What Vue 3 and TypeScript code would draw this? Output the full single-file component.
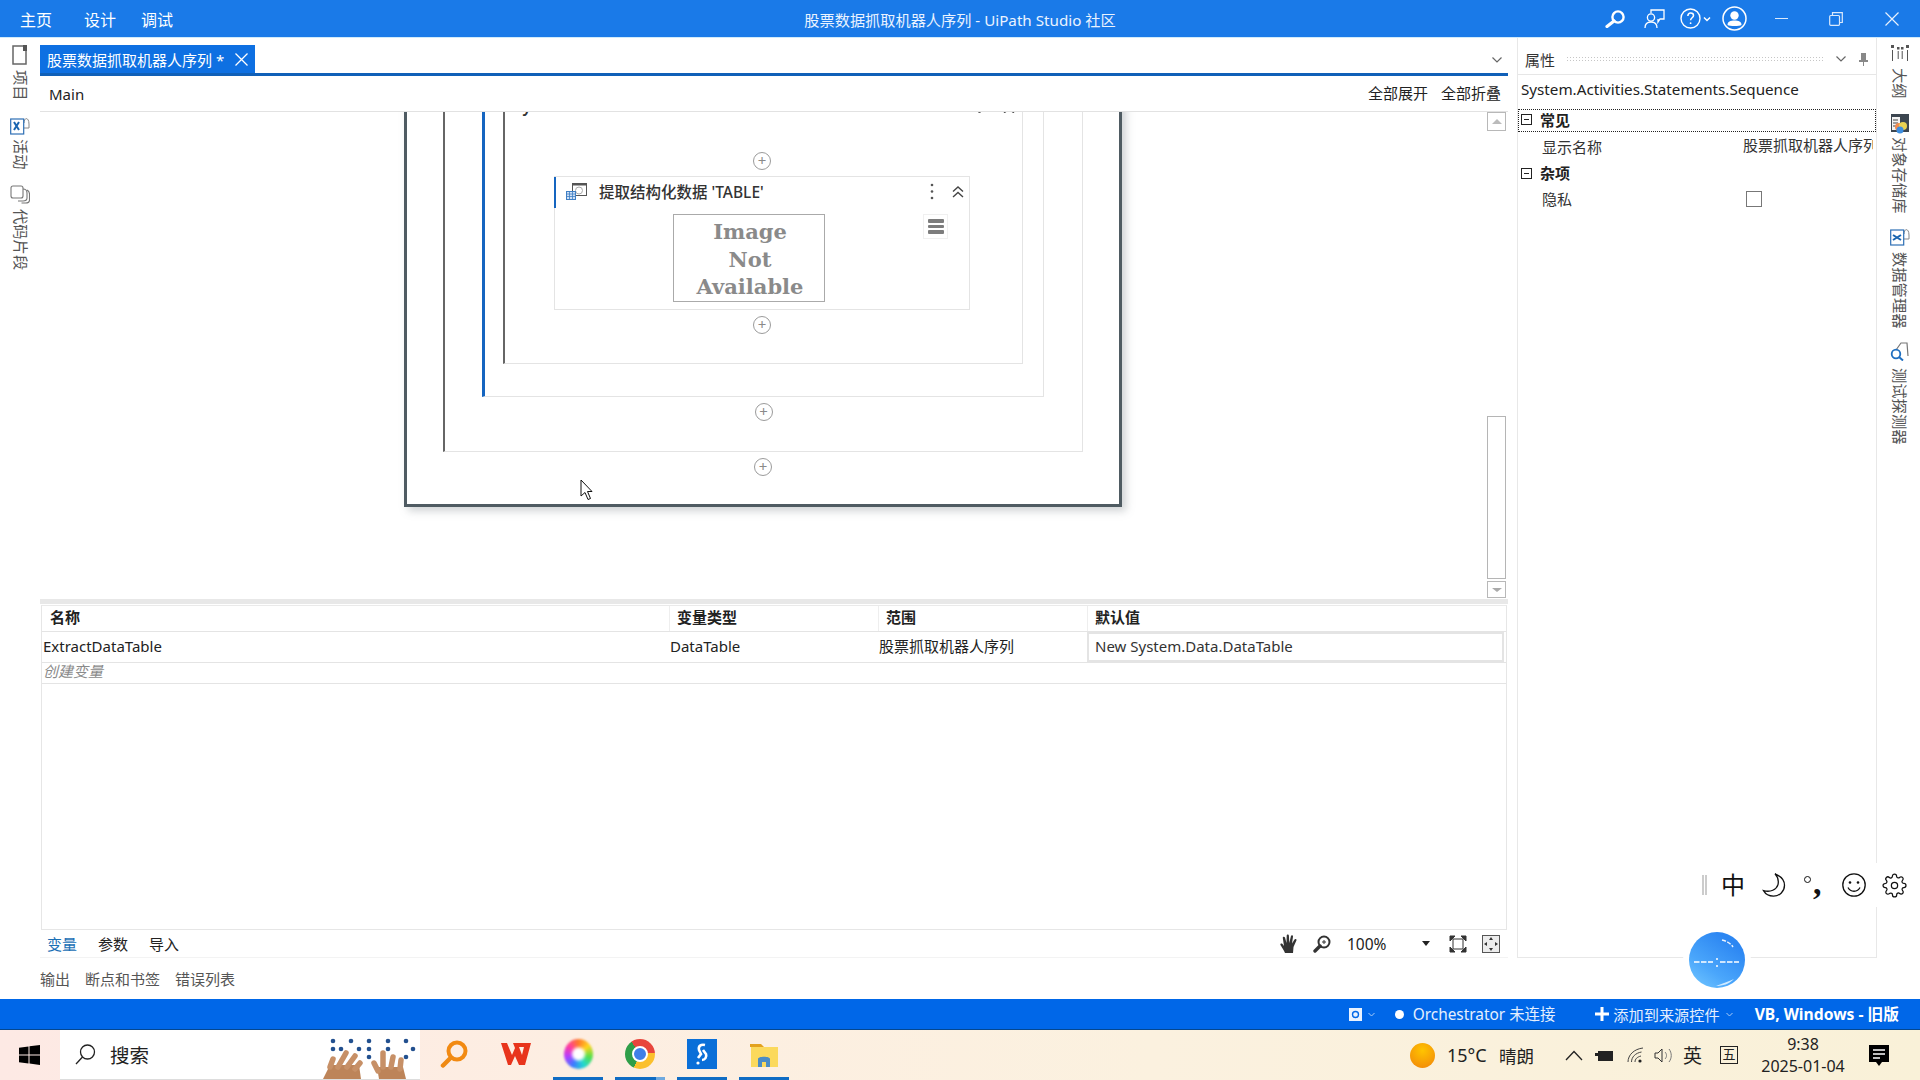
<script setup lang="ts">
const menus: string[] = ['主页', '设计', '调试']
const varTabs: string[] = ['变量', '参数', '导入']
const outTabs: string[] = ['输出', '断点和书签', '错误列表']
const headers: string[] = ['名称', '变量类型', '范围', '默认值']
const brailleDots: [number, number][] = [
  [12, 12], [30, 12], [48, 12], [67, 12], [85, 12],
  [12, 20], [20, 20], [38, 20], [48, 20], [67, 20], [92, 20],
  [48, 28], [85, 28]
]
</script>

<template>
  <div class="screen">
    <header class="titlebar">
      <nav class="menus">
        <span v-for="m in menus" :key="m" class="menu">{{ m }}</span>
      </nav>
      <div class="apptitle">股票数据抓取机器人序列 - UiPath Studio 社区</div>
      <div class="winbtns">
        <svg class="tb-search" width="22" height="18" viewBox="0 0 22 18" fill="none" stroke="#fff"><circle cx="14" cy="7" r="5.6" stroke-width="2.4"/><path d="M10 11 3 16.5" stroke-width="3.2" stroke-linecap="round"/></svg>
        <svg class="tb-feedback" width="21" height="20" viewBox="0 0 21 20" fill="none" stroke="#fff" stroke-width="1.3"><path d="M7 4V1h13v9h-4l-2 3v-3"/><circle cx="7" cy="8.5" r="3.6"/><path d="M1 19c0-4 2.500-6 6-6s6 2 6 6"/></svg>
        <svg class="tb-help" width="21" height="21" viewBox="0 0 21 21" fill="none" stroke="#fff" stroke-width="1.4"><circle cx="10.500" cy="10.500" r="9.500"/><path d="M7.800 8c.2-2 1.400-3 2.900-3 1.700 0 2.800 1 2.800 2.500 0 2.300-2.900 2.300-2.900 4.800" stroke-width="1.500"/><circle cx="10.600" cy="15.200" r=".9" fill="#fff" stroke="none"/></svg>
        <svg class="tb-caret" width="8" height="6" viewBox="0 0 8 6" fill="none" stroke="#fff" stroke-width="1.500"><path d="M1 1.500 4 4.500 7 1.500"/></svg>
        <svg class="tb-user" width="25" height="25" viewBox="0 0 25 25" fill="none"><circle cx="12.500" cy="12.500" r="11.500" stroke="#fff" stroke-width="1.500"/><circle cx="12.500" cy="9.500" r="4.200" fill="#fff"/><path d="M5.500 19c0-3.500 3-4.500 7-4.500s7 1 7 4.500c-2 1.300-12 1.300-14 0z" fill="#fff"/></svg>
        <span class="tb-min"></span>
        <svg class="tb-restore" width="14" height="14" viewBox="0 0 14 14" fill="none" stroke="#dbe9fb" stroke-width="1.200"><rect x=".7" y="3.500" width="9.800" height="9.800" rx="1"/><path d="M3.500 3.500V.7h9.800v9.800h-2.800"/></svg>
        <svg class="tb-close" width="14" height="14" viewBox="0 0 14 14" stroke="#e8f1fd" stroke-width="1.200"><path d="M.5.500l13 13M13.500.500l-13 13"/></svg>
      </div>
    </header>

    <main class="workspace">
      <aside class="strip strip-left">
        <div class="dock dock-project">
          <svg width="16" height="20" viewBox="0 0 16 20" fill="none"><rect x="1" y="1" width="13" height="18" stroke="#666" stroke-width="1.500"/><path d="M11 0h4v6h-4z" fill="#555"/></svg>
          <span class="vtext">项目</span>
        </div>
        <div class="dock dock-activity">
          <svg width="20" height="18" viewBox="0 0 20 18" fill="none"><path d="M14 6c0-6 5-6 5 1v4h-5" stroke="#888"/><rect x=".7" y="2" width="13" height="15" fill="#fff" stroke="#2d6fb5" stroke-width="1.200"/><path d="M4 5l5 8M9 5l-5 8" stroke="#1a65b0" stroke-width="2"/></svg>
          <span class="vtext">活动</span>
        </div>
        <div class="dock dock-snippet">
          <svg width="20" height="19" viewBox="0 0 20 19" fill="none" stroke="#777" stroke-width="1.100"><rect x="1" y="1" width="12" height="12" rx="2"/><path d="M13 4c3 0 4 2 4 4v5c0 2-2 3-4 3H8"/><path d="M17 5c2 1 2.500 2 2.500 4v6c0 2-2 3-4 3h-4"/></svg>
          <span class="vtext vtext-wide">代码片段</span>
        </div>
      </aside>

      <section class="center">
        <div class="tabstrip">
          <div class="tab">
            <span>股票数据抓取机器人序列 *</span>
            <svg width="13" height="13" viewBox="0 0 13 13" stroke="#fff" stroke-width="1.300"><path d="M.5.500l12 12M12.500.500l-12 12"/></svg>
          </div>
          <svg class="tab-chevron" width="10" height="6" viewBox="0 0 10 6" fill="none" stroke="#666" stroke-width="1.200"><path d="M.5.500 5 5 9.500.500"/></svg>
        </div>
        <div class="crumb">
          <span class="crumb-main">Main</span>
          <span class="crumb-btn">全部展开</span>
          <span class="crumb-btn crumb-btn-last">全部折叠</span>
        </div>

        <div class="designer">
          <div class="canvas">
            <div class="wf wf-outer">
              <div class="wf wf-2">
                <div class="wf wf-3">
                  <div class="wf wf-4">
                    <div class="clip-head">
                      <span class="clip-text">y 20</span>
                      <span class="clip-dot"></span>
                      <svg class="clip-chev" width="12" height="8" viewBox="0 0 12 8" fill="none" stroke="#555" stroke-width="1.300"><path d="M1 4 6 0 11 4M1 8 6 4 11 8"/></svg>
                    </div>
                    <span class="plus">+</span>
                    <article class="activity">
                      <div class="act-head">
                        <svg width="21" height="17" viewBox="0 0 21 17" fill="none"><rect x="6.500" y=".5" width="14" height="12" fill="#fff" stroke="#555"/><rect x="6.500" y=".5" width="14" height="2" fill="#555"/><circle cx="13" cy="7.500" r="3.500" stroke="#aaa"/><rect x=".5" y="8.500" width="9" height="8" fill="#cfe0f5" stroke="#3f7fc4"/><path d="M.5 11h9M.5 13.500h9M3.500 8.500v8M6.500 8.500v8" stroke="#3f7fc4" stroke-width=".8"/></svg>
                        <span class="act-title">提取结构化数据 'TABLE'</span>
                        <svg class="act-dots" width="4" height="17" viewBox="0 0 4 17" fill="#555"><circle cx="2" cy="2" r="1.300"/><circle cx="2" cy="8.500" r="1.300"/><circle cx="2" cy="15" r="1.300"/></svg>
                        <svg class="act-chev" width="12" height="12" viewBox="0 0 12 12" fill="none" stroke="#444" stroke-width="1.400"><path d="M1 5.500 6 1l5 4.500M1 11 6 6.500 11 11"/></svg>
                      </div>
                      <div class="act-body">
                        <div class="noimg">Image<br>Not<br>Available</div>
                        <div class="burger"><i></i><i></i><i></i></div>
                      </div>
                    </article>
                    <span class="plus plus-after">+</span>
                  </div>
                </div>
                <span class="plus plus-after">+</span>
              </div>
              <span class="plus plus-after">+</span>
            </div>
          </div>
          <div class="vscroll">
            <div class="sbtn"><span class="tri-up"></span></div>
            <div class="thumb"></div>
            <div class="sbtn sbtn-down"><span class="tri-down"></span></div>
          </div>
        </div>

        <div class="splitter"></div>

        <div class="vars">
          <div class="vrow vhead">
            <span v-for="h in headers" :key="h" class="vh">{{ h }}</span>
          </div>
          <div class="vrow vdata">
            <span class="vd vd-name">ExtractDataTable</span>
            <span class="vd">DataTable</span>
            <span class="vd">股票抓取机器人序列</span>
            <span class="vd vd-default">New System.Data.DataTable</span>
          </div>
          <div class="vcreate">创建变量</div>
        </div>

        <div class="vartabs">
          <span v-for="(t, i) in varTabs" :key="t" class="vartab" :class="{ active: i === 0 }">{{ t }}</span>
          <svg class="hand" width="18" height="19" viewBox="0 0 18 19" fill="#333"><path d="M5 19c-1-3-3-5-4.500-8-.6-1.400 1-2 2-1l1.500 2L2.800 4c-.2-1.500 1.700-1.800 2.200-.4L6.500 9 6.700 1.600c0-1.600 2.100-1.600 2.200 0L9.300 9l1.600-6.700c.3-1.500 2.300-1.100 2.100.4L12 9.500l2.500-4c.8-1.200 2.500-.3 1.900 1L13.500 13 13 19z"/></svg>
          <svg class="zoomglass" width="18" height="18" viewBox="0 0 18 18" fill="none"><circle cx="11" cy="7" r="5.500" stroke="#333" stroke-width="2"/><path d="M7 11 2 16" stroke="#333" stroke-width="3.400" stroke-linecap="round"/><path d="M11 5v4M9 7h4" stroke="#333"/></svg>
          <span class="zoompct">100%</span>
          <span class="tri-drop"></span>
          <svg class="fit1" width="18" height="18" viewBox="0 0 18 18" fill="none" stroke="#333"><rect x="4" y="4" width="10" height="10"/><path d="M1 1h5L1 6zM17 1h-5l5 5zM1 17h5l-5-5zM17 17h-5l5-5z" fill="#333"/></svg>
          <svg class="fit2" width="18" height="18" viewBox="0 0 18 18"><rect x=".5" y=".5" width="17" height="17" fill="#ececec" stroke="#555"/><path d="M9 2l2 3H7zM9 16l-2-3h4zM2 9l3-2v4zM16 9l-3 2V7z" fill="#333"/></svg>
        </div>
        <div class="outtabs">
          <span v-for="t in outTabs" :key="t" class="outtab">{{ t }}</span>
        </div>
      </section>

      <section class="props">
        <div class="props-head">
          <span class="props-title">属性</span>
          <span class="grip"></span>
          <svg width="10" height="6" viewBox="0 0 10 6" fill="none" stroke="#666" stroke-width="1.200"><path d="M.5.500 5 5 9.500.500"/></svg>
          <svg class="pin" width="9" height="13" viewBox="0 0 9 13" fill="#888"><path d="M2 0h5v7h2v2H5v4H4V9H0V7h2z"/></svg>
        </div>
        <div class="props-body">
          <div class="props-type">System.Activities.Statements.Sequence</div>
          <div class="cat cat-first"><span class="minus"></span><b>常见</b></div>
          <div class="prop prop-a"><span class="prop-name">显示名称</span><span class="prop-val">股票抓取机器人序列</span></div>
          <div class="cat"><span class="minus"></span><b>杂项</b></div>
          <div class="prop prop-b"><span class="prop-name">隐私</span><span class="check"></span></div>
        </div>
      </section>

      <aside class="strip strip-right">
        <div class="dock dock-outline">
          <svg width="18" height="16" viewBox="0 0 18 16" fill="#555"><rect x="0" y="0" width="3" height="3"/><rect x="15" y="0" width="3" height="3"/><rect x="6" y="2" width="2.500" height="2.500"/><rect x="10" y="2" width="2.500" height="2.500"/><path d="M1 5h1v11H1zM16 5h1v11h-1zM6.700 6h1v8h-1zM10.700 6h1v8h-1z"/></svg>
          <span class="vtext">大纲</span>
        </div>
        <div class="dock dock-objrepo">
          <svg width="18" height="20" viewBox="0 0 18 20"><rect x="0" y="0" width="18" height="18" fill="#3c4650"/><rect x="1" y="3" width="8" height="13" fill="#f4f4f4"/><path d="M2 6h5M2 9h5M2 12h5" stroke="#444"/><circle cx="8" cy="13" r="4" fill="#f28b50"/><circle cx="12" cy="12" r="4" fill="#e9d252"/><circle cx="9" cy="16" r="3.500" fill="#3d8ee0"/></svg>
          <span class="vtext">对象存储库</span>
        </div>
        <div class="dock dock-data">
          <svg width="20" height="18" viewBox="0 0 20 18" fill="none"><path d="M14 6c0-6 5-6 5 1v4h-5" stroke="#888"/><rect x=".7" y="2" width="13" height="15" fill="#fff" stroke="#2d6fb5" stroke-width="1.200"/><path d="M3 7l8 5M11 7l-8 5" stroke="#1a65b0" stroke-width="2"/></svg>
          <span class="vtext">数据管理器</span>
        </div>
        <div class="dock dock-test">
          <svg width="19" height="19" viewBox="0 0 19 19" fill="none"><path d="M6 8 11 1h6l1 13" stroke="#777" stroke-width="1.200"/><circle cx="6" cy="12" r="4.300" stroke="#1f6fc0" stroke-width="1.800"/><path d="M9 15l4 3.500" stroke="#1f6fc0" stroke-width="2"/></svg>
          <span class="vtext">测试探测器</span>
        </div>
      </aside>
    </main>

    <footer class="statusbar">
      <svg class="st-box" width="13" height="13" viewBox="0 0 13 13"><rect width="13" height="13" fill="#e9f2ff"/><circle cx="6.500" cy="6.500" r="3" fill="none" stroke="#0067e8" stroke-width="1.400"/></svg>
      <svg class="st-caret" width="7" height="5" viewBox="0 0 7 5" fill="none" stroke="#a8ccf7"><path d="M.5 1 3.500 4l3-3"/></svg>
      <span class="st-dot"></span>
      <span class="st-orch">Orchestrator 未连接</span>
      <svg class="st-plus" width="14" height="14" viewBox="0 0 14 14" fill="#fff"><path d="M5.500 0h3v5.500H14v3H8.500V14h-3V8.500H0v-3h5.500z"/></svg>
      <span class="st-add">添加到来源控件</span>
      <svg class="st-caret2" width="7" height="5" viewBox="0 0 7 5" fill="none" stroke="#a8ccf7"><path d="M.5 1 3.500 4l3-3"/></svg>
      <b class="st-lang">VB, Windows - 旧版</b>
    </footer>

    <div class="taskbar">
      <div class="start">
        <svg width="21" height="20" viewBox="0 0 21 20" fill="#000"><path d="M0 2.800 9.500 1.400v8H0zM10.500 1.300 21 0v9.400H10.500zM0 10.500h9.500v8.100L0 17.200zM10.500 10.500H21V20l-10.500-1.400z"/></svg>
      </div>
      <div class="searchbox">
        <svg width="21" height="21" viewBox="0 0 21 21" fill="none" stroke="#222" stroke-width="1.300"><circle cx="12.500" cy="8" r="7"/><path d="M7.500 13 1 20"/></svg>
        <span class="search-label">搜索</span>
        <svg class="hands" width="96" height="50" viewBox="0 0 96 50">
          <circle v-for="(d, i) in brailleDots" :key="i" :cx="d[0]" :cy="d[1]" r="2.300" fill="#22508f"/>
          <path d="M2 50 9 36h29l2 14z" fill="#bd8459"/>
          <g fill="none" stroke="#c79067" stroke-width="5.500" stroke-linecap="round">
            <path d="M9 38 12 30"/><path d="M17 38 25 24"/><path d="M26 38 34 27"/><path d="M34 40 39 34"/>
          </g>
          <path d="M58 50 56 38h26l3 12z" fill="#bd8459"/>
          <g fill="none" stroke="#c79067" stroke-width="5.500" stroke-linecap="round">
            <path d="M57 42 53 34"/><path d="M62 38 62 24"/><path d="M70 38 72 28"/><path d="M79 40 80 31"/>
          </g>
        </svg>
      </div>
      <div class="apps">
        <div class="app">
          <svg width="28" height="29" viewBox="0 0 28 29" fill="none"><circle cx="17" cy="11" r="8.500" stroke="#f28a12" stroke-width="4"/><path d="M10.500 18 3 25.500" stroke="#ef8a14" stroke-width="4.500" stroke-linecap="round"/></svg>
        </div>
        <div class="app">
          <svg width="30" height="24" viewBox="0 0 30 24"><path d="M0 1h6l5 12 3-7-2-5h18l-6 22h-6l-4-9-4 9H7zM18 5l3 8 2-8z" fill="#e8341c"/></svg>
        </div>
        <div class="app app-on"><span class="ring"></span></div>
        <div class="app app-on app-chrome"><span class="chrome"><i></i></span></div>
        <div class="app app-on">
          <svg width="30" height="30" viewBox="0 0 30 30"><rect width="30" height="30" fill="#0a6fd8"/><path d="M18 6c-4-1-7 1-6 5l2 4-3 4" fill="none" stroke="#fff" stroke-width="2.600"/><path d="M16 11l3 4c1 3-1 6-4 6" fill="none" stroke="#fff" stroke-width="2.600"/><circle cx="11" cy="24" r="1.600" fill="#fff"/></svg>
        </div>
        <div class="app app-on">
          <svg width="28" height="25" viewBox="0 0 28 25"><path d="M0 2h11l3 3H0z" fill="#e3a21f"/><rect x="1" y="5" width="27" height="20" fill="#fbd95c"/><path d="M8 25v-8c0-3 12-3 12 0v8h-4v-5h-4v5z" fill="#4b8cc4"/></svg>
        </div>
      </div>
      <div class="tray">
        <span class="sun"></span>
        <span class="temp">15°C</span>
        <span class="weather">晴朗</span>
        <svg class="tr-up" width="18" height="11" viewBox="0 0 18 11" fill="none" stroke="#222" stroke-width="1.300"><path d="M1 10 9 1.500 17 10"/></svg>
        <svg class="tr-batt" width="18" height="11" viewBox="0 0 18 11" fill="#222"><path d="M0 3h3V1h15v10H3V6H0z"/></svg>
        <svg class="tr-wifi" width="17" height="16" viewBox="0 0 17 16" fill="none" stroke="#444"><path d="M1 15C1 8 7 2 16 1M4.500 15c0-5 4-9 10-10M8 15c0-3 2-5 6-6"/><circle cx="13" cy="14" r="1.600" fill="#222" stroke="none"/></svg>
        <svg class="tr-vol" width="21" height="17" viewBox="0 0 21 17" fill="none" stroke="#333"><path d="M1 6h3l4-4v13l-4-4H1z"/><path d="M11 5c2 2 2 5 0 7M15 2c3 4 3 9 0 13" stroke="#777"/></svg>
        <span class="tr-en">英</span>
        <span class="tr-wu">五</span>
        <div class="clock"><span>9:38</span><span>2025-01-04</span></div>
        <svg class="tr-note" width="20" height="21" viewBox="0 0 20 21"><path d="M0 0h20v17h-7l-3 4-3-4H0z" fill="#000"/><path d="M4 5h12M4 9h12M4 13h7" stroke="#fff" stroke-width="1.300"/></svg>
      </div>
    </div>

    <div class="ime">
      <span class="ime-grip"></span>
      <span class="ime-zh">中</span>
      <svg class="ime-moon" width="24" height="24" viewBox="0 0 24 24" fill="none" stroke="#111" stroke-width="1.300"><path d="M13 .8c5 2 9.500 6 9.500 11.500 0 6-4.800 10.800-11 10.800-4 0-8-2-10-5.500 7 2 13-1 14.500-6C17 7 15.500 3.500 13 .8z"/></svg>
      <span class="ime-punc"><i class="deg"></i><b>,</b></span>
      <svg class="ime-smile" width="24" height="24" viewBox="0 0 24 24" fill="none" stroke="#111" stroke-width="1.300"><circle cx="12" cy="12" r="11.200"/><circle cx="8" cy="9.500" r="1.300" fill="#111" stroke="none"/><circle cx="16" cy="9.500" r="1.300" fill="#111" stroke="none"/><path d="M6 14.500c2.500 5 9.500 5 12 0"/></svg>
      <svg class="ime-gear" width="25" height="25" viewBox="0 0 24 24" fill="none" stroke="#111" stroke-width="1.200"><path d="M12 15a3 3 0 1 0 0-6 3 3 0 0 0 0 6z"/><path d="M19.400 15a1.650 1.650 0 0 0 .33 1.820l.06.06a2 2 0 1 1-2.830 2.830l-.06-.06a1.650 1.650 0 0 0-1.820-.33 1.650 1.650 0 0 0-1 1.510V21a2 2 0 0 1-4 0v-.09A1.650 1.650 0 0 0 9 19.400a1.650 1.650 0 0 0-1.820.33l-.06.06a2 2 0 1 1-2.830-2.830l.06-.06a1.650 1.650 0 0 0 .33-1.820 1.650 1.650 0 0 0-1.510-1H3a2 2 0 0 1 0-4h.09A1.650 1.650 0 0 0 4.600 9a1.650 1.650 0 0 0-.33-1.820l-.06-.06a2 2 0 1 1 2.830-2.830l.06.06a1.650 1.650 0 0 0 1.820.33H9a1.650 1.650 0 0 0 1-1.510V3a2 2 0 0 1 4 0v.09a1.650 1.650 0 0 0 1 1.510 1.650 1.650 0 0 0 1.820-.33l.06-.06a2 2 0 1 1 2.830 2.830l-.06.06a1.650 1.650 0 0 0-.33 1.820V9a1.650 1.650 0 0 0 1.510 1H21a2 2 0 0 1 0 4h-.09a1.650 1.650 0 0 0-1.510 1z"/></svg>
    </div>

    <div class="orb">
      <svg width="56" height="56" viewBox="0 0 56 56" fill="none" stroke="#fff">
        <path d="M33 8c5 1 9 4 11 7" stroke-width="1.400" stroke-dasharray="4 1.500" opacity=".9"/>
        <path d="M5 30h19M31 30h19" stroke-width="1.600" stroke-dasharray="5.500 1.500"/>
        <circle cx="28" cy="27" r="1" fill="#fff" stroke="none"/>
        <circle cx="28" cy="34" r="1" fill="#fff" stroke="none"/>
        <path d="M27 54c7 0 13-2 18-7-5 2-12 5-18 7z" fill="#cfeaff" stroke="none"/>
      </svg>
    </div>

    <svg class="cursor" width="13" height="22" viewBox="0 0 13 22"><path d="M1 1v16l4-3.500 3 7 2.500-1-3-7H12z" fill="#fff" stroke="#111"/></svg>
  </div>
</template>

<style>
html, body { margin: 0; padding: 0; background: #fff; overflow: hidden; }
</style>

<style scoped>
.screen {
  position: relative;
  width: 1920px;
  height: 1080px;
  overflow: hidden;
  display: flex;
  flex-direction: column;
  background: #fff;
  color: #222;
  font-family: "Noto Sans", "Noto Sans CJK SC", sans-serif;
  font-size: 15px;
}

/* title bar */
.titlebar {
  height: 37px;
  flex: none;
  display: grid;
  grid-template-columns: 1fr auto 1fr;
  align-items: center;
  background: #1a7ae8;
  color: #fff;
  border-bottom: 1px solid #cfeafb;
  box-sizing: content-box;
}
.menus { display: flex; padding-left: 20px; padding-top: 1px; font-size: 16px; }
.menu { width: 32px; white-space: nowrap; margin-right: 32px; }
.menu:nth-child(2) { margin-right: 25px; }
.apptitle { font-size: 15.200px; color: #eaf3ff; white-space: nowrap; }
.winbtns { display: flex; align-items: center; justify-content: flex-end; height: 37px; }
.tb-feedback { margin-left: 18px; }
.tb-help { margin-left: 15px; }
.tb-caret { margin-left: 2px; }
.tb-user { margin-left: 11px; }
.tb-min { width: 13px; height: 1px; background: #dbe9fb; margin-left: 28px; }
.tb-restore { margin-left: 41px; }
.tb-close { margin-left: 42px; margin-right: 21px; }

/* main */
.workspace { flex: 1; min-height: 0; display: flex; height: 961px; }
.strip { flex: none; display: flex; flex-direction: column; align-items: center; color: #555; }
.strip-left { width: 40px; padding-top: 7px; box-sizing: border-box; }
.strip-right { width: 43px; padding-top: 7px; box-sizing: border-box; padding-left: 2px; }
.dock { display: flex; flex-direction: column; align-items: center; gap: 5px; }
.vtext {
  writing-mode: vertical-rl;
  text-orientation: sideways;
  font-size: 15.300px;
  line-height: 17px;
  white-space: nowrap;
}
.dock-activity { margin-top: 16px; gap: 4px; }
.dock-snippet { margin-top: 16px; }
.dock-outline { gap: 7px; }
.dock-objrepo { margin-top: 15px; gap: 3px; }
.dock-data { margin-top: 15px; gap: 6px; }
.dock-test { margin-top: 13px; gap: 7px; }

.center { width: 1468px; flex: none; display: flex; flex-direction: column; }
.tabstrip {
  height: 38px;
  flex: none;
  box-sizing: border-box;
  padding-top: 7px;
  display: flex;
  align-items: flex-start;
  border-bottom: 3px solid #1060b8;
}
.tab {
  width: 215px;
  height: 28px;
  box-sizing: border-box;
  background: #0e70e2;
  color: #fff;
  display: flex;
  align-items: center;
  justify-content: space-between;
  padding: 0 7px 0 7px;
  font-size: 15px;
  white-space: nowrap;
}
.tab-chevron { margin: 12px 6px 0 auto; }
.crumb {
  height: 36px;
  flex: none;
  box-sizing: border-box;
  display: flex;
  align-items: center;
  border-bottom: 1px solid #e2e2e2;
  padding-left: 9px;
}
.crumb-main { margin-right: auto; font-size: 15px; }
.crumb-btn { font-size: 15px; margin-right: 13px; line-height: 22px; padding-bottom: 1px; }
.crumb-btn-last { margin-right: 7px; }

.designer { height: 487px; flex: none; display: flex; }
.canvas { flex: 1; min-width: 0; overflow: hidden; }

.wf {
  box-sizing: border-box;
  display: flex;
  flex-direction: column;
  align-items: center;
  justify-content: flex-end;
  flex: none;
  background: #fff;
}
.wf-outer {
  width: 718px;
  height: 455px;
  margin: -60px 0 0 364px;
  padding-bottom: 28px;
  border: 3px solid #4f5b62;
  border-top: none;
  box-shadow: 4px 4px 8px rgba(120, 130, 135, .35);
}
.wf-2 {
  width: 640px;
  height: 396px;
  padding: 0 2px 30px 0;
  border: 1px solid #e4e4e4;
  border-left: 2px solid #666;
  border-top: none;
}
.wf-3 {
  width: 562px;
  height: 336px;
  padding: 0 2px 32px 0;
  border: 1px solid #e4e4e4;
  border-left: 3px solid #1565c0;
  border-top: none;
}
.wf-4 {
  width: 520px;
  height: 293px;
  padding: 0 2px 29px 0;
  border: 1px solid #e4e4e4;
  border-left: 2px solid #666;
  border-top: none;
}
.wf-2 > .plus { margin-left: 2px; }
.clip-head {
  height: 42px;
  align-self: stretch;
  display: flex;
  align-items: flex-end;
  margin-bottom: auto;
  padding-left: 18px;
  position: relative;
}
.clip-text { font-size: 16px; line-height: 14px; font-weight: 600; color: #333; height: 14px; letter-spacing: 1px; }
.clip-dot { width: 3px; height: 3px; border-radius: 50%; background: #555; margin-left: 420px; }
.clip-chev { margin-left: 22px; }
.plus {
  width: 18px;
  height: 18px;
  flex: none;
  box-sizing: border-box;
  border: 1px solid #9b9b9b;
  border-radius: 50%;
  color: #8a8a8a;
  font-size: 15px;
  line-height: 15px;
  text-align: center;
}
.plus-after { margin-top: 6px; }
.activity {
  width: 416px;
  height: 134px;
  flex: none;
  margin-top: 6px;
  box-sizing: border-box;
  border: 1px solid #e4e4e4;
}
.act-head {
  height: 31px;
  margin: 0 0 0 -1px;
  box-sizing: border-box;
  border-left: 2px solid #1565c0;
  display: flex;
  align-items: center;
  padding: 0 0 2px 10px;
}
.act-title { margin-left: 12px; font-size: 15.500px; font-weight: 500; color: #333; }
.act-dots { margin-left: auto; }
.act-chev { margin: 0 5px 0 18px; }
.act-body { display: flex; align-items: flex-start; padding: 6px 0 0 118px; }
.noimg {
  width: 152px;
  height: 88px;
  box-sizing: border-box;
  border: 1px solid #aaa;
  font-family: "DejaVu Serif", serif;
  font-weight: 700;
  font-size: 21px;
  line-height: 27.500px;
  color: #8a8a8a;
  text-align: center;
  padding: 3px 0 0 2px;
}
.burger {
  width: 25px;
  height: 25px;
  margin-left: 98px;
  box-sizing: border-box;
  border: 1px solid #f0f0f0;
  display: flex;
  flex-direction: column;
  align-items: center;
  justify-content: center;
  gap: 2px;
}
.burger i { display: block; width: 16px; height: 3.500px; background: #7d7d7d; border-radius: 1px; }

.vscroll { width: 21px; flex: none; display: flex; flex-direction: column; align-items: flex-start; }
.sbtn {
  width: 19px;
  height: 19px;
  flex: none;
  box-sizing: border-box;
  border: 1px solid #b8b8b8;
  display: flex;
  align-items: center;
  justify-content: center;
}
.sbtn-down { margin: 2px 0 1px; height: 17px; }
.thumb { width: 19px; height: 163px; margin-top: auto; box-sizing: border-box; border: 1px solid #b5b5b5; }
.tri-up { border: 4px solid transparent; border-top: 0; border-bottom: 5px solid #bbb; border-left-width: 5px; border-right-width: 5px; }
.tri-down { border: 5px solid transparent; border-bottom: 0; border-top: 4px solid #aaa; }

.splitter { height: 5px; flex: none; background: #e8e8e8; }
.vars { flex: 1; min-height: 0; margin-top: 1px; border: 1px solid #e6e6e6; margin-left: 1px; margin-right: 1px; box-sizing: border-box; border-top: 1px solid #eaeaea; }
.vrow { display: grid; grid-template-columns: 627px 209px 209px 1fr; }
.vhead { height: 26px; border-bottom: 1px solid #e4e4e4; box-sizing: border-box; align-items: center; }
.vh { font-weight: 700; font-size: 15px; line-height: 22px; padding: 0 0 3px 8px; color: #222; }
.vh:nth-child(n + 2) { padding-left: 7px; border-left: 1px solid #eee; height: 100%; box-sizing: border-box; display: flex; align-items: center; }
.vdata { height: 31px; border-bottom: 1px solid #e4e4e4; box-sizing: border-box; align-items: center; }
.vd { font-size: 15px; line-height: 22px; padding: 0 0 3px 1px; color: #222; white-space: nowrap; }
.vd-default { padding: 0 0 3px 6px; margin-right: 2px; height: 100%; box-sizing: border-box; border: 2px solid #e4e4e4; display: flex; align-items: center; color: #333; }
.vcreate { height: 21px; border-bottom: 1px solid #e4e4e4; box-sizing: border-box; padding-left: 1px; font-style: italic; color: #8a8a8a; font-size: 15px; line-height: 16px; }

.vartabs { height: 28px; flex: none; display: flex; align-items: center; padding-left: 7px; border-bottom: 1px solid #f3f3f3; box-sizing: border-box; }
.vartab { font-size: 15px; margin-right: 21px; color: #222; }
.vartab.active { color: #1a6fb5; }
.hand { margin-left: auto; }
.zoomglass { margin-left: 15px; }
.zoompct { width: 75px; margin-left: 16px; font-size: 15.500px; }
.tri-drop { border: 4px solid transparent; border-bottom: 0; border-top: 5px solid #222; }
.fit1 { margin-left: 19px; }
.fit2 { margin-left: 15px; margin-right: 8px; }
.outtabs { height: 41px; flex: none; display: flex; align-items: center; box-sizing: border-box; color: #555; }
.outtab { font-size: 15px; margin-right: 15px; }

.props { width: 360px; flex: none; margin-left: 9px; height: 920px; box-sizing: border-box; border-left: 1px solid #e8e8e8; border-right: 1px solid #e8e8e8; border-bottom: 1px solid #e8e8e8; display: flex; flex-direction: column; margin-right: 0; }
.props-head { height: 37px; flex: none; box-sizing: border-box; display: flex; align-items: center; padding: 6px 8px 0 7px; border-bottom: 1px solid #e6e6e6; }
.props-title { font-size: 15px; color: #333; }
.grip {
  width: 257px;
  height: 6px;
  margin: 0 13px 0 11px;
  background-image: radial-gradient(circle, #c6c6c6 0.700px, transparent 0.800px);
  background-size: 3px 3px;
}
.pin { margin-left: 13px; }
.props-body { flex: 1; display: flex; flex-direction: column; }
.props-type { height: 34px; flex: none; padding-left: 3px; font-size: 15.200px; line-height: 29px; color: #222; white-space: nowrap; }
.cat { height: 26px; display: flex; align-items: center; padding: 0 0 2px 3px; flex: none; box-sizing: border-box; margin-top: 3px; }
.cat b { font-size: 15px; line-height: 20px; margin-left: 8px; font-weight: 700; color: #222; }
.cat-first { height: 23px; border: 1px dotted #222; margin-top: 0; padding-left: 2px; }
.minus { width: 11px; height: 11px; box-sizing: border-box; border: 1px solid #222; position: relative; flex: none; }
.minus::after { content: ""; position: absolute; left: 2px; right: 2px; top: 4px; height: 1px; background: #222; }
.prop { height: 26px; display: flex; align-items: center; padding-left: 24px; flex: none; overflow: hidden; margin-right: 3px; }
.prop-a { padding-top: 2px; box-sizing: border-box; }
.prop-b { margin-top: -2px; }
.prop-name { width: 201px; flex: none; font-size: 15px; color: #333; }
.prop-val { font-size: 15px; white-space: nowrap; margin-top: -4px; color: #333; }
.check { width: 16px; height: 16px; box-sizing: border-box; border: 1px solid #777; margin-left: 3px; margin-top: 1px; }

/* status */
.statusbar {
  height: 30px;
  flex: none;
  display: flex;
  align-items: center;
  justify-content: flex-end;
  padding-right: 21px;
  background: #0067e8;
  color: #fff;
  font-size: 15.200px;
  border-bottom: 1px solid #04478f;
  box-sizing: content-box;
}
.st-caret { margin-left: 6px; }
.st-dot { width: 9px; height: 9px; border-radius: 50%; background: #fff; margin-left: 20px; }
.st-orch { margin-left: 9px; color: #e4effe; font-size: 15.400px; padding-bottom: 1px; }
.st-plus { margin-left: 40px; }
.st-add { margin-left: 4px; color: #e4effe; padding-bottom: 1px; }
.st-caret2 { margin-left: 6px; }
.st-lang { margin-left: 22px; font-weight: 700; font-size: 15.700px; padding-bottom: 1px; }

/* taskbar */
.taskbar {
  height: 50px;
  flex: none;
  display: flex;
  background: linear-gradient(90deg, #fde9e4 0%, #fdeee2 30%, #fbf1df 60%, #f9f1d8 100%);
}
.start { width: 60px; display: flex; align-items: center; justify-content: center; flex: none; padding-right: 1px; box-sizing: border-box; }
.searchbox { width: 360px; flex: none; background: #fff; display: flex; align-items: center; padding-left: 15px; box-sizing: border-box; overflow: hidden; border-bottom: 1px solid #ddd; }
.search-label { font-size: 19.500px; margin-left: 14px; color: #222; }
.hands { margin-left: auto; margin-right: 3px; align-self: flex-end; }
.apps { display: flex; gap: 12px; margin-left: 9px; }
.app { width: 50px; height: 50px; box-sizing: border-box; display: flex; align-items: center; justify-content: center; border-bottom: 3px solid transparent; padding-top: 1px; }
.app-on { border-bottom-color: #0f6cc4; }
.app-chrome { border-image: linear-gradient(90deg, #0f6cc4 80%, #6fa9df 80%) 1; }
.ring {
  width: 29px;
  height: 30px;
  border-radius: 50%;
  background:
    radial-gradient(circle, #fff 0 22%, transparent 40%),
    conic-gradient(#ff7a2a, #ffd51e, #57e04a, #22d8d0, #3b7dff, #b43bff, #ff3ba0, #ff7a2a);
  filter: blur(.8px);
}
.chrome {
  width: 30px;
  height: 30px;
  border-radius: 50%;
  background: conic-gradient(#e8453c 0 85deg, #fbc02d 85deg 205deg, #2f9e48 205deg 325deg, #e8453c 325deg);
  display: flex;
  align-items: center;
  justify-content: center;
}
.chrome i { width: 12px; height: 12px; border-radius: 50%; background: #3f7fe8; border: 2.500px solid #fff; display: block; }
.tray { margin-left: auto; display: flex; align-items: center; padding-right: 31px; color: #222; }
.sun { width: 25px; height: 25px; border-radius: 50%; background: radial-gradient(circle at 50% 30%, #ffc400, #f28a0a 90%); }
.temp { margin-left: 12px; font-size: 18px; width: 40px; white-space: nowrap; }
.weather { margin-left: 12px; font-size: 17.500px; white-space: nowrap; }
.tr-up { margin-left: 31px; }
.tr-batt { margin-left: 12px; }
.tr-wifi { margin-left: 14px; }
.tr-vol { margin-left: 10px; }
.tr-en { margin-left: 8px; font-size: 19px; }
.tr-wu { margin-left: 18px; width: 18px; height: 18px; box-sizing: border-box; border: 1px solid #222; font-size: 13px; line-height: 15px; text-align: center; }
.clock { width: 84px; margin-left: 23px; display: flex; flex-direction: column; align-items: center; font-size: 16px; line-height: 22px; white-space: nowrap; margin-top: -1px; }
.tr-note { margin-left: 24px; }

/* overlays */
.ime {
  position: absolute;
  left: 1698px;
  top: 863px;
  width: 222px;
  height: 44px;
  box-sizing: border-box;
  background: #fff;
  display: flex;
  align-items: center;
  padding-left: 4px;
}
.ime-grip { width: 5px; height: 20px; box-sizing: border-box; border-left: 2px solid #ccc; border-right: 2px solid #ccc; }
.ime-zh { margin-left: 14px; font-size: 24px; line-height: 26px; color: #111; width: 24px; }
.ime-moon { margin-left: 17px; }
.ime-punc { margin-left: 18px; width: 22px; height: 24px; position: relative; display: block; }
.deg { position: absolute; left: 0; top: 3px; width: 7px; height: 7px; border: 1px solid #111; border-radius: 50%; box-sizing: border-box; }
.ime-punc b { position: absolute; left: 9px; top: -7px; font-size: 34px; line-height: 34px; color: #111; font-family: "Liberation Serif", serif; }
.ime-smile { margin-left: 16px; }
.ime-gear { margin-left: 16px; }
.orb {
  position: absolute;
  left: 1689px;
  top: 932px;
  width: 56px;
  height: 56px;
  border-radius: 50%;
  background: linear-gradient(215deg, #2c86f2 20%, #4aa6fb 65%, #6fc4ff 95%);
  box-shadow: 0 0 0 6px #fff;
}
.orb svg { display: block; }
.cursor { position: absolute; left: 580px; top: 479px; }
</style>
